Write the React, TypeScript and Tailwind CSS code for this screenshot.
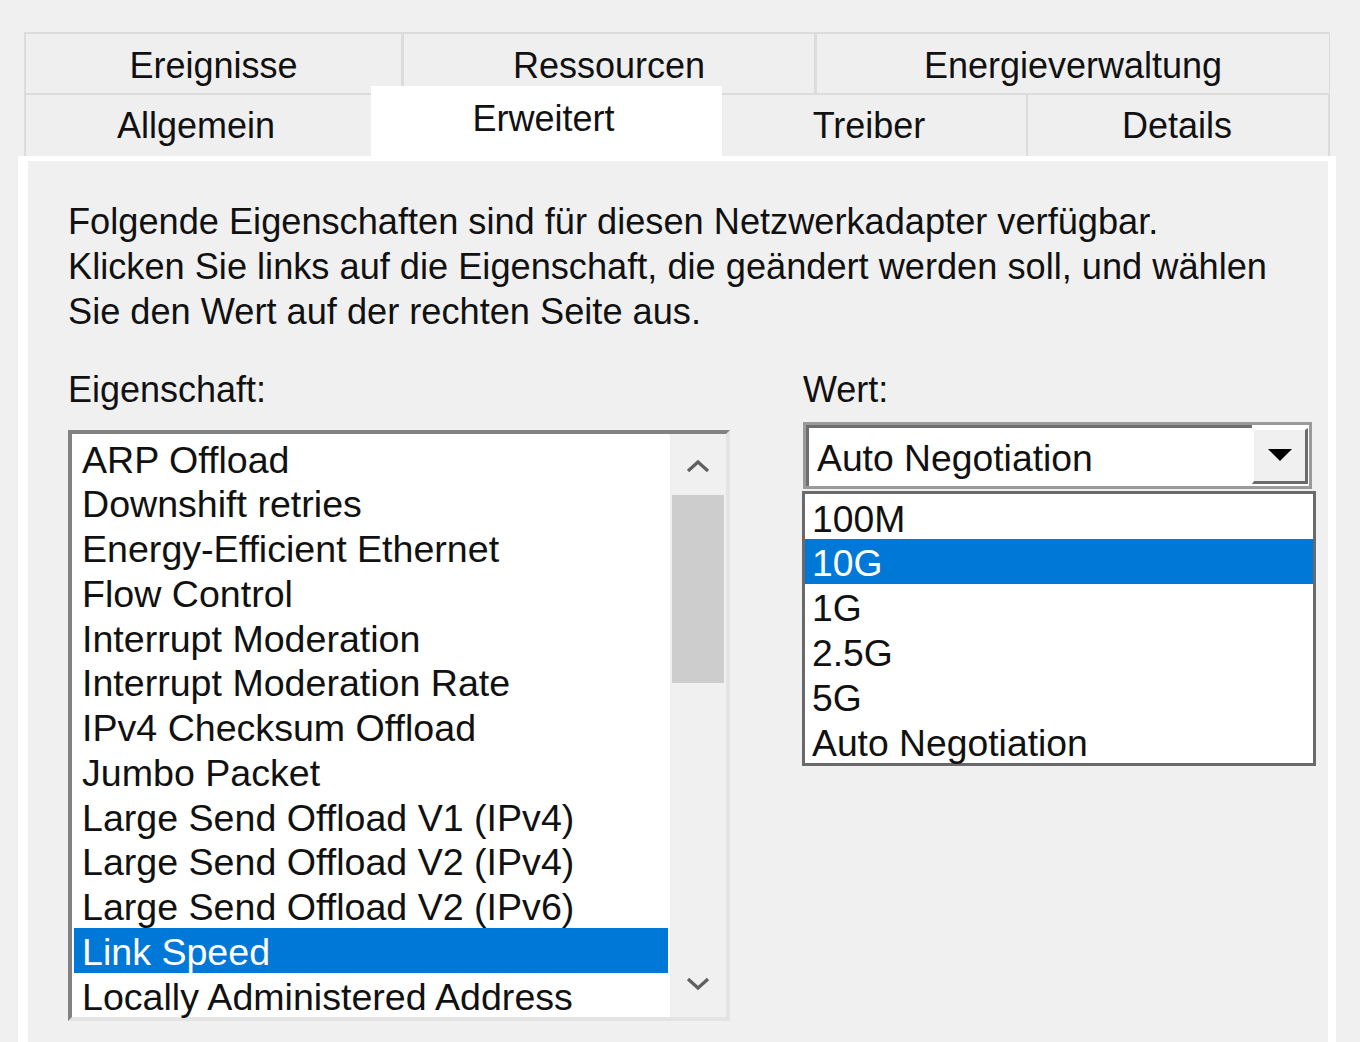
import React from 'react';

const topTabs = [
  { label: 'Ereignisse', w: 'w-[378px]' },
  { label: 'Ressourcen', w: 'w-[413px]' },
  { label: 'Energieverwaltung', w: 'w-[515px]' },
];

const props = [
  'ARP Offload',
  'Downshift retries',
  'Energy-Efficient Ethernet',
  'Flow Control',
  'Interrupt Moderation',
  'Interrupt Moderation Rate',
  'IPv4 Checksum Offload',
  'Jumbo Packet',
  'Large Send Offload V1 (IPv4)',
  'Large Send Offload V2 (IPv4)',
  'Large Send Offload V2 (IPv6)',
  'Link Speed',
  'Locally Administered Address',
];

const speeds = ['100M', '10G', '1G', '2.5G', '5G', 'Auto Negotiation'];

function Chevron({ up }: { up?: boolean }) {
  return (
    <svg width="24" height="14" viewBox="0 0 24 14" fill="none" stroke="#606060" strokeWidth="3.2">
      {up ? <path d="M2 12L12 3l10 9" /> : <path d="M2 2l10 9 10-9" />}
    </svg>
  );
}

export default function App() {
  return (
    <div className="w-[1360px] h-[1042px] overflow-hidden bg-[#f0f0f0] font-['Liberation_Sans',Arial,sans-serif] text-[36px] leading-[45px] text-[#111]">
      {/* Tabs */}
      <div className="pl-[24px] pt-[32px]">
        <div className="flex h-[61px]">
          {topTabs.map((t) => (
            <div
              key={t.label}
              className={`${t.w} flex items-center justify-center border-t-2 border-l-2 border-r border-[#dcdcdc] bg-[#efefef] pt-[4px]`}
            >
              {t.label}
            </div>
          ))}
        </div>
        <div className="flex h-[63px] items-start">
          <div className="w-[347px] h-full flex items-center justify-center border-t-2 border-l-2 border-[#dcdcdc] bg-[#efefef] pr-[5px]">
            Allgemein
          </div>
          <div className="relative z-10 w-[351px] h-[74px] -mt-[7px] flex items-start justify-center bg-white pt-[10px] pr-[6px]">
            Erweitert
          </div>
          <div className="w-[306px] h-full flex items-center justify-center border-t-2 border-r-2 border-[#dcdcdc] bg-[#efefef] pr-[10px]">
            Treiber
          </div>
          <div className="w-[302px] h-full flex items-center justify-center border-t-2 border-r-2 border-[#dcdcdc] bg-[#efefef] pr-[2px]">
            Details
          </div>
        </div>
      </div>

      {/* Panel */}
      <div className="ml-[18px] w-[1318px] h-[900px] border-l-[10px] border-t-[5px] border-r-[8px] border-white bg-[#f0f0f0] pl-[40px] pt-[38px]">
        <p className="text-[36.2px]">
          Folgende Eigenschaften sind für diesen Netzwerkadapter verfügbar.
          <br />
          Klicken Sie links auf die Eigenschaft, die geändert werden soll, und wählen
          <br />
          Sie den Wert auf der rechten Seite aus.
        </p>

        <div className="flex mt-[33px] gap-[72px]">
          {/* Left column */}
          <div className="w-[662px]">
            <div>Eigenschaft:</div>
            <div className="mt-[18px] h-[591px] flex border-4 border-t-[#828282] border-l-[#828282] border-r-[#e4e4e4] border-b-[#e4e4e4] bg-white">
              <div className="flex-1 p-[2px] pt-[1.6px] text-[37.6px]">
                {props.map((p) => (
                  <div
                    key={p}
                    className={`h-[44.75px] leading-[44.75px] pl-[8px] pt-[2px] whitespace-nowrap ${
                      p === 'Link Speed' ? 'bg-[#0078d7] text-white' : ''
                    }`}
                  >
                    {p}
                  </div>
                ))}
              </div>
              <div className="w-[56px] bg-[#f0f0f0] flex flex-col">
                <div className="h-[61px] flex items-center justify-center pt-[2px]">
                  <Chevron up />
                </div>
                <div className="h-[188px] mx-[2px] bg-[#cdcdcd]" />
                <div className="flex-1" />
                <div className="h-[62px] flex items-center justify-center pb-[4px]">
                  <Chevron />
                </div>
              </div>
            </div>
          </div>

          {/* Right column */}
          <div className="w-[514px] text-[37.3px]">
            <div className="pl-[1px] text-[36px]">Wert:</div>
            <div className="mt-[10px] ml-[1px] w-[509px] h-[67px] flex items-center border-[3px] border-[#9a9a9a] bg-white">
              <div className="flex-1 h-full border-t-[3px] border-l-[3px] border-[#6e6e6e] flex items-center pl-[8px] pt-[3px]">
                Auto Negotiation
              </div>
              <div className="w-[56px] h-[56px] mr-[1px] bg-[#f0f0f0] flex items-center justify-center border-t-2 border-l-2 border-b-[3px] border-r-[3px] border-t-white border-l-white border-b-[#6b6b6b] border-r-[#6b6b6b]">
                <svg width="26" height="14" viewBox="0 0 26 14">
                  <path d="M1 1h24L13 13z" fill="#000" />
                </svg>
              </div>
            </div>
            <div className="mt-[2px] w-[514px] h-[275px] border-[3px] border-[#6a6a6a] bg-white pt-[0.6px]">
              {speeds.map((s) => (
                <div
                  key={s}
                  className={`h-[44.8px] leading-[44.8px] pl-[7px] pt-[2px] ${
                    s === '10G' ? 'bg-[#0078d7] text-white' : ''
                  }`}
                >
                  {s}
                </div>
              ))}
            </div>
          </div>
        </div>
      </div>
    </div>
  );
}
